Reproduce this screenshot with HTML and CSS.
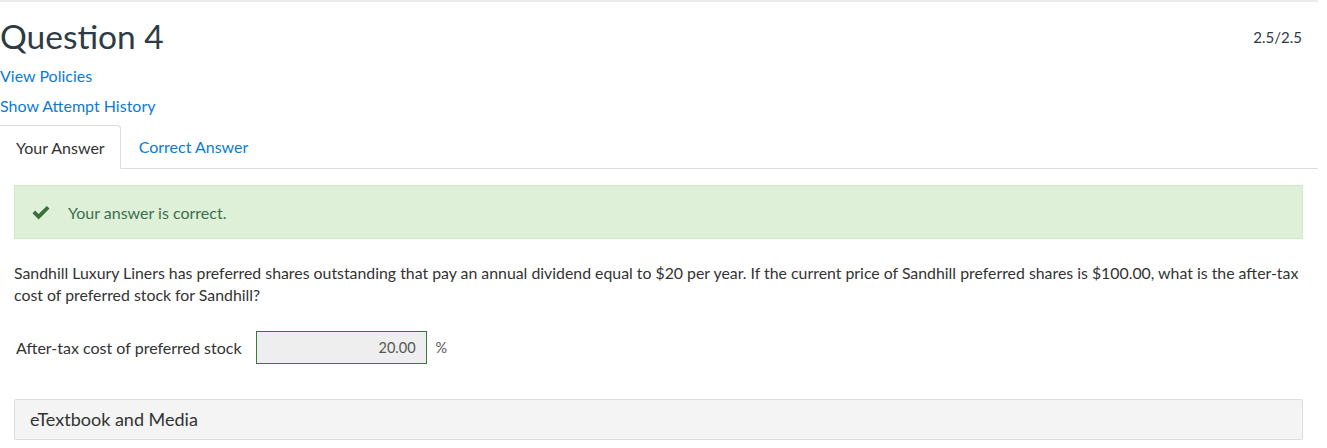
FILE: index.html
```html
<!DOCTYPE html>
<html>
<head>
<meta charset="utf-8">
<link rel="stylesheet" href="styles.css">
</head>
<body>
<div class="page">
  <div class="header">
    <div class="head-left">
      <h1 class="title">Question 4</h1>
      <a class="link policies" href="#">View Policies</a>
      <a class="link history" href="#">Show Attempt History</a>
    </div>
    <div class="score">2.5/2.5</div>
  </div>
  <div class="tabs">
    <div class="tab active">Your Answer</div>
    <div class="tab second">Correct Answer</div>
    <div class="tab-fill"></div>
  </div>
  <div class="content">
    <div class="alert">
      <svg class="check" width="20" height="16" viewBox="0 0 20 16"><path d="M1.5 8.2 L4.2 5.6 L7.6 9 L15.8 0.9 L18.5 3.6 L7.6 14.5 Z" fill="#3a6e3b"/></svg>
      <span>Your answer is correct.</span>
    </div>
    <p class="question">Sandhill Luxury Liners has preferred shares outstanding that pay an annual dividend equal to $20 per year. If the current price of Sandhill preferred shares is $100.00, what is the after-tax cost of preferred stock for Sandhill?</p>
    <div class="answer-row">
      <span class="label">After-tax cost of preferred stock</span>
      <div class="input">20.00</div>
      <span class="unit">%</span>
    </div>
    <div class="media">eTextbook and Media</div>
  </div>
</div>
</body>
</html>
```
FILE: styles.css
```css
* { box-sizing: border-box; }
html, body { margin: 0; padding: 0; background: #fff; }
body { font-family: Lato, "Noto Sans", sans-serif; color: #333; font-size: 16px; }
.page { width: 1318px; border-top: 2px solid #ebebeb; }
.header { display: flex; justify-content: space-between; align-items: flex-start; }
.head-left { display: flex; flex-direction: column; align-items: flex-start; }
.title { margin: 0; padding-top: 12px; font-size: 33.5px; font-weight: 400; color: #2d3b45; line-height: 44px; }
.link { color: #0a7cd6; text-decoration: none; font-size: 16px; line-height: 30px; }
.policies { margin-top: 3px; }
.score { padding-top: 26px; padding-right: 16px; color: #2d3b45; font-size: 15px; }
.tabs { display: flex; margin-top: 4px; height: 44px; }
.tab { padding: 0 16px; line-height: 43px; font-size: 16px; color: #0a7cd6; border-bottom: 1px solid #ddd; white-space: nowrap; }
.tab.second { padding-left: 18px; }
.tab.active { color: #333; border: 1px solid #ddd; border-bottom-color: transparent; border-left: none; border-radius: 0 4px 0 0; padding-right: 15px; }
.tab-fill { flex: 1; border-bottom: 1px solid #ddd; }
.content { padding: 16px 15px 0 14px; }
.alert { display: flex; align-items: center; height: 54px; background: #dff0d8; border: 1px solid #d0e9c6; padding-left: 16px; color: #3c6e4e; font-size: 16px; }
.check { margin-right: 17px; margin-top: 1px; }
.question { margin: 23px 0 0; line-height: 22px; font-size: 15.85px; color: #333; }
.answer-row { display: flex; align-items: center; margin-top: 25px; padding-left: 2px; }
.label { font-size: 16px; color: #333; }
.input { margin-left: 14px; width: 171px; height: 33px; border: 1px solid #3c763d; background: #eee; text-align: right; padding-right: 10px; line-height: 31px; color: #555; font-size: 14.5px; }
.unit { margin-left: 9px; color: #555; font-size: 14.5px; }
.media { margin-top: 35px; height: 41px; background: #f4f4f4; border: 1px solid #ddd; border-radius: 2px; padding-left: 15px; line-height: 39px; font-size: 18px; color: #333; }
```
